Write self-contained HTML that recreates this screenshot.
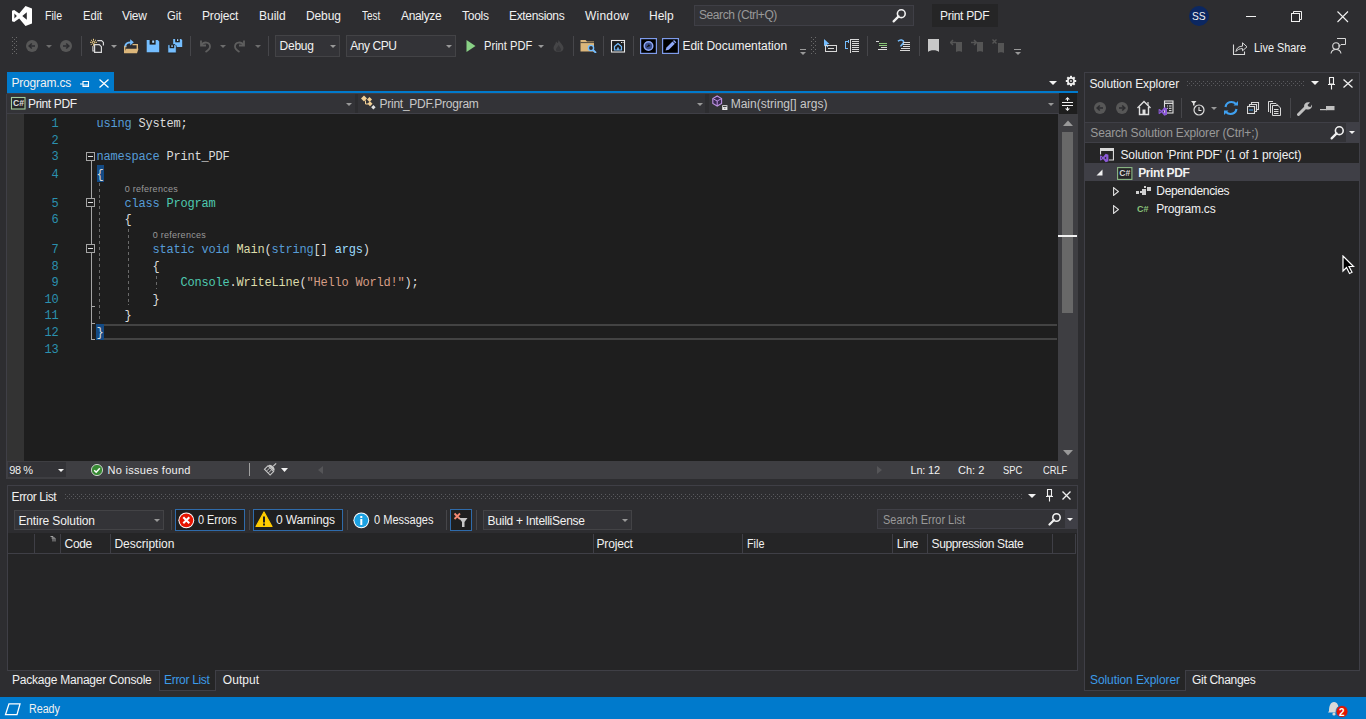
<!DOCTYPE html>
<html><head><meta charset="utf-8">
<style>
*{margin:0;padding:0;box-sizing:border-box}
html,body{width:1366px;height:719px;overflow:hidden;background:#2D2D30;font-family:"Liberation Sans",sans-serif;color:#F1F1F1;font-size:12px}
.a{position:absolute;display:block}
.t{position:absolute;white-space:nowrap;line-height:16px}
</style></head><body>

<svg class="a" style="left:12px;top:6px" width="20" height="20" viewBox="0 0 20 20"><path fill="#FFFFFF" fill-rule="evenodd" d="M0 4.8 L2.2 4.1 L7.2 7.6 L13.5 0 L20 2.4 L20 17.6 L13.5 20 L7.2 12.4 L2.2 15.9 L0 15.2 Z M2.4 7.6 L4.9 10 L2.4 12.4 Z M10.3 10 L14.8 6.2 L14.8 13.8 Z"/></svg>
<div class="t" style="left:44.60px;top:7.74px;font-size:12px;color:#F1F1F1;transform:scaleX(0.8850);transform-origin:0 0">File</div>
<div class="t" style="left:82.50px;top:7.74px;font-size:12px;color:#F1F1F1;transform:scaleX(0.9286);transform-origin:0 0">Edit</div>
<div class="t" style="left:122.00px;top:7.74px;font-size:12px;color:#F1F1F1;letter-spacing:-0.333px">View</div>
<div class="t" style="left:167.00px;top:7.74px;font-size:12px;color:#F1F1F1;transform:scaleX(0.9375);transform-origin:0 0">Git</div>
<div class="t" style="left:202.00px;top:7.74px;font-size:12px;color:#F1F1F1;letter-spacing:-0.167px">Project</div>
<div class="t" style="left:259.00px;top:7.74px;font-size:12px;color:#F1F1F1">Build</div>
<div class="t" style="left:306.00px;top:7.74px;font-size:12px;color:#F1F1F1;letter-spacing:-0.125px">Debug</div>
<div class="t" style="left:362.00px;top:7.74px;font-size:12px;color:#F1F1F1;transform:scaleX(0.8261);transform-origin:0 0">Test</div>
<div class="t" style="left:401.00px;top:7.74px;font-size:12px;color:#F1F1F1;letter-spacing:-0.333px">Analyze</div>
<div class="t" style="left:462.00px;top:7.74px;font-size:12px;color:#F1F1F1;letter-spacing:-0.250px">Tools</div>
<div class="t" style="left:509.00px;top:7.74px;font-size:12px;color:#F1F1F1;letter-spacing:-0.333px">Extensions</div>
<div class="t" style="left:585.00px;top:7.74px;font-size:12px;color:#F1F1F1;letter-spacing:0.200px">Window</div>
<div class="t" style="left:649.00px;top:7.74px;font-size:12px;color:#F1F1F1">Help</div>
<div class="a" style="left:694px;top:5px;width:220px;height:21px;background:#333337;border:1px solid #3F3F46"></div>
<div class="t" style="left:699.00px;top:7.34px;font-size:12px;color:#999999;letter-spacing:-0.429px">Search (Ctrl+Q)</div>
<svg class="a" style="left:892px;top:8px" width="15" height="15" viewBox="0 0 15 15"><circle cx="9.3" cy="5.7" r="3.9" fill="none" stroke="#F1F1F1" stroke-width="1.6"/><path d="M6.6 8.4 L1.6 13.4" stroke="#F1F1F1" stroke-width="2.2" stroke-linecap="round"/></svg>
<div class="a" style="left:932px;top:4px;width:66px;height:23px;background:#252526"></div>
<div class="t" style="left:940.00px;top:7.74px;font-size:12px;color:#F1F1F1;letter-spacing:-0.312px">Print PDF</div>
<svg class="a" style="left:1189px;top:6px" width="20" height="20" viewBox="0 0 20 20"><circle cx="10" cy="10" r="10" fill="#0B2761"/></svg>
<div class="t" style="left:1192.20px;top:7.89px;font-size:11px;color:#F1F1F1;transform:scaleX(0.9333);transform-origin:0 0">SS</div>
<div class="a" style="left:1246px;top:16px;width:10px;height:1px;background:#F1F1F1"></div>
<svg class="a" style="left:1291px;top:11px" width="12" height="12" viewBox="0 0 12 12"><rect x="0.5" y="2.5" width="8" height="8" fill="none" stroke="#F1F1F1"/><path d="M2.5 2.5 V0.5 H10.5 V8.5 H8.5" fill="none" stroke="#F1F1F1"/></svg>
<svg class="a" style="left:1337px;top:11px" width="12" height="12" viewBox="0 0 12 12"><path d="M0.5 0.5 L11 11 M11 0.5 L0.5 11" stroke="#F1F1F1" stroke-width="1.1"/></svg>
<svg class="a" style="left:12px;top:37px" width="5" height="18" viewBox="0 0 5 18"><rect x="0" y="0" width="1" height="1" fill="#6A6A6A"/><rect x="0" y="4" width="1" height="1" fill="#6A6A6A"/><rect x="0" y="8" width="1" height="1" fill="#6A6A6A"/><rect x="0" y="12" width="1" height="1" fill="#6A6A6A"/><rect x="0" y="16" width="1" height="1" fill="#6A6A6A"/><rect x="4" y="0" width="1" height="1" fill="#6A6A6A"/><rect x="4" y="4" width="1" height="1" fill="#6A6A6A"/><rect x="4" y="8" width="1" height="1" fill="#6A6A6A"/><rect x="4" y="12" width="1" height="1" fill="#6A6A6A"/><rect x="4" y="16" width="1" height="1" fill="#6A6A6A"/><rect x="2" y="2" width="1" height="1" fill="#6A6A6A"/><rect x="2" y="6" width="1" height="1" fill="#6A6A6A"/><rect x="2" y="10" width="1" height="1" fill="#6A6A6A"/><rect x="2" y="14" width="1" height="1" fill="#6A6A6A"/></svg>
<svg class="a" style="left:26px;top:40px" width="12" height="12" viewBox="0 0 12 12"><circle cx="6" cy="6" r="6" fill="#575757"/><path d="M9 6 H3.5 M5.8 3.5 L3.2 6 L5.8 8.5" stroke="#2D2D30" stroke-width="1.6" fill="none"/></svg>
<svg class="a" style="left:46.0px;top:45px" width="6" height="3" viewBox="0 0 6 3"><path d="M0 0H6 L3.0 3 Z" fill="#6D6D6D"/></svg>
<svg class="a" style="left:60px;top:40px" width="12" height="12" viewBox="0 0 12 12"><circle cx="6" cy="6" r="6" fill="#575757"/><path d="M3 6 H8.5 M6.2 3.5 L8.8 6 L6.2 8.5" stroke="#2D2D30" stroke-width="1.6" fill="none"/></svg>
<div class="a" style="left:81px;top:36px;width:1px;height:20px;background:#46464A"></div>
<svg class="a" style="left:89px;top:38px" width="16" height="16" viewBox="0 0 16 16"><g stroke="#F2D38A" stroke-width="1" fill="none"><path d="M6.40 4.30 L8.00 4.30"/><path d="M5.84 5.64 L6.97 6.77"/><path d="M4.50 6.20 L4.50 7.80"/><path d="M3.16 5.64 L2.03 6.77"/><path d="M2.60 4.30 L1.00 4.30"/><path d="M3.16 2.96 L2.03 1.83"/><path d="M4.50 2.40 L4.50 0.80"/><path d="M5.84 2.96 L6.97 1.83"/><circle cx="4.5" cy="4.3" r="1.1"/></g><path d="M8.3 2.6 H12.6 L14.4 4.4 V7.5" fill="none" stroke="#D8D8D8" stroke-width="1.2"/><path d="M5.6 14.4 V6.6 H10.3 L12.4 8.7 V14.4 Z" fill="#2D2D30" stroke="#D8D8D8" stroke-width="1.2"/><path d="M3.9 8 V13 H5" fill="none" stroke="#D8D8D8" stroke-width="1.1"/></svg>
<svg class="a" style="left:111.0px;top:45px" width="6" height="3" viewBox="0 0 6 3"><path d="M0 0H6 L3.0 3 Z" fill="#999999"/></svg>
<svg class="a" style="left:123px;top:38px" width="16" height="16" viewBox="0 0 16 16"><path d="M1.7 15 V8.5 H3.5 M9.5 6.6 H14.3 V11" fill="none" stroke="#DCB67A" stroke-width="1.4"/><path d="M1 15.2 L3 10.8 H15.5 L14 15.2 Z" fill="#DCB67A"/><path d="M2.2 8.5 C2.4 5.6 4.6 4.3 8 4.3" fill="none" stroke="#75BEFF" stroke-width="1.8"/><path d="M7.2 1.2 L10.8 4.3 L7.2 7.4 Z" fill="#75BEFF"/></svg>
<svg class="a" style="left:146px;top:40px" width="14" height="13" viewBox="0 0 14 13"><path d="M0.7 0 H11.6 L13.2 1.6 V12.2 H0.7 Z" fill="#75BEFF"/><rect x="3.6" y="0" width="6" height="4.6" fill="#1E1E1E"/><rect x="6.2" y="0.5" width="2" height="2.3" fill="#A8D4FF"/></svg>
<svg class="a" style="left:167px;top:38px" width="16" height="16" viewBox="0 0 16 16"><path d="M6.2 0.9 H14 L15.2 2.1 V9 H6.2 Z" fill="#75BEFF"/><rect x="8.2" y="0.9" width="4.6" height="3.4" fill="#1E1E1E"/><rect x="10" y="1.2" width="1.3" height="1.8" fill="#A8D4FF"/><path d="M0.8 6.6 H8 L9.3 7.9 V14.9 H0.8 Z" fill="#75BEFF" stroke="#1E1E1E" stroke-width="0.8"/><rect x="2.6" y="6.8" width="4.6" height="3.4" fill="#1E1E1E"/><rect x="4.4" y="7.2" width="1.3" height="1.8" fill="#A8D4FF"/></svg>
<div class="a" style="left:190px;top:36px;width:1px;height:20px;background:#46464A"></div>
<svg class="a" style="left:198px;top:39px" width="14" height="14" viewBox="0 0 14 14"><path d="M3 1.5 V6.5 H8" fill="none" stroke="#5E5E5E" stroke-width="1.8"/><path d="M3.5 6 C5.5 2.5 12 2.5 12 7.5 C12 10 10 11.5 7.5 13" fill="none" stroke="#5E5E5E" stroke-width="1.8"/></svg>
<svg class="a" style="left:220.0px;top:45px" width="6" height="3" viewBox="0 0 6 3"><path d="M0 0H6 L3.0 3 Z" fill="#6D6D6D"/></svg>
<svg class="a" style="left:233px;top:39px" width="14" height="14" viewBox="0 0 14 14"><path d="M11 1.5 V6.5 H6" fill="none" stroke="#5E5E5E" stroke-width="1.8"/><path d="M10.5 6 C8.5 2.5 2 2.5 2 7.5 C2 10 4 11.5 6.5 13" fill="none" stroke="#5E5E5E" stroke-width="1.8"/></svg>
<svg class="a" style="left:255.0px;top:45px" width="6" height="3" viewBox="0 0 6 3"><path d="M0 0H6 L3.0 3 Z" fill="#6D6D6D"/></svg>
<div class="a" style="left:268px;top:36px;width:1px;height:20px;background:#46464A"></div>
<div class="a" style="left:275px;top:35px;width:65px;height:22px;background:#333337;border:1px solid #434346"></div>
<div class="t" style="left:279.60px;top:37.74px;font-size:12px;color:#F1F1F1;letter-spacing:-0.250px">Debug</div>
<svg class="a" style="left:330.0px;top:45px" width="6" height="3" viewBox="0 0 6 3"><path d="M0 0H6 L3.0 3 Z" fill="#999999"/></svg>
<div class="a" style="left:346px;top:35px;width:110px;height:22px;background:#333337;border:1px solid #434346"></div>
<div class="t" style="left:350.20px;top:37.74px;font-size:12px;color:#F1F1F1;letter-spacing:-0.417px">Any CPU</div>
<svg class="a" style="left:446.0px;top:45px" width="6" height="3" viewBox="0 0 6 3"><path d="M0 0H6 L3.0 3 Z" fill="#999999"/></svg>
<svg class="a" style="left:466px;top:40px" width="10" height="12" viewBox="0 0 10 12"><path d="M0.5 0 L9.5 6 L0.5 12 Z" fill="#89D185"/></svg>
<div class="t" style="left:483.50px;top:37.54px;font-size:12px;color:#F1F1F1;transform:scaleX(0.9288);transform-origin:0 0">Print PDF</div>
<svg class="a" style="left:538.0px;top:45px" width="6" height="3" viewBox="0 0 6 3"><path d="M0 0H6 L3.0 3 Z" fill="#999999"/></svg>
<svg class="a" style="left:553px;top:40px" width="11" height="12" viewBox="0 0 11 12"><path d="M5.5 0 C7 3 10.5 5 10.5 8 C10.5 10.5 8.5 12 5.5 12 C2.5 12 0.5 10.5 0.5 8 C0.5 5.5 3 4 3 1.5 C4.5 3 5 4.5 5.5 0 Z" fill="#454547"/><path d="M5.5 5 C6.5 7 8 8 8 9.5 C8 11 7 11.5 5.5 11.5 C4 11.5 3 11 3 9.5 C3 8 5 7 5.5 5 Z" fill="#37373A"/></svg>
<div class="a" style="left:573px;top:36px;width:1px;height:20px;background:#46464A"></div>
<svg class="a" style="left:580px;top:39px" width="17" height="14" viewBox="0 0 17 14"><path d="M0.5 1 H5.5 L7 2.5 H14 V12.5 H0.5 Z" fill="#DCB67A"/><path d="M0.5 3.6 H14" stroke="#2D2D30" stroke-width="0.8"/><circle cx="11" cy="9" r="2.6" fill="#2D2D30" stroke="#75BEFF" stroke-width="1.4"/><path d="M13 11 L16 14" stroke="#75BEFF" stroke-width="1.8"/></svg>
<div class="a" style="left:603px;top:36px;width:1px;height:20px;background:#46464A"></div>
<svg class="a" style="left:610px;top:39px" width="16" height="14" viewBox="0 0 16 14"><rect x="1.5" y="1.5" width="13" height="11.5" fill="#1E1E1E" stroke="#E8E8E8" stroke-width="1.1"/><path d="M4.5 7.5 L8 4.5 L11.5 7.5 V11 H4.5 Z" fill="none" stroke="#75BEFF" stroke-width="1.2"/><rect x="7.2" y="8.5" width="1.6" height="2.5" fill="#75BEFF"/><rect x="11" y="3" width="1" height="1" fill="#E8E8E8"/><rect x="12.6" y="3" width="1" height="1" fill="#E8E8E8"/></svg>
<div class="a" style="left:633px;top:36px;width:1px;height:20px;background:#46464A"></div>
<svg class="a" style="left:640px;top:38px" width="17" height="16" viewBox="0 0 17 16"><rect x="0.6" y="0.6" width="15.8" height="14.8" fill="#000" stroke="#7E9BEA" stroke-width="1.2"/><circle cx="8.5" cy="8" r="4.3" fill="#3A4F8F" stroke="#8FA8F5" stroke-width="1.4"/><path d="M6 9.5 L8.8 6.3 L10.5 8 Z" fill="#111"/></svg>
<svg class="a" style="left:662px;top:38px" width="17" height="16" viewBox="0 0 17 16"><rect x="0.6" y="0.6" width="15.8" height="14.8" fill="#000" stroke="#7E9BEA" stroke-width="1.2"/><path d="M3.5 12.5 L4.5 9.5 L10.5 3.5 L12.8 5.8 L6.8 11.8 Z" fill="#8FA8F5"/><path d="M11.5 2.5 L13.8 4.8" stroke="#8FA8F5" stroke-width="1.4"/></svg>
<div class="t" style="left:682.40px;top:38.34px;font-size:12px;color:#F1F1F1">Edit Documentation</div>
<div class="a" style="left:800px;top:49px;width:6px;height:1px;background:#999999"></div>
<svg class="a" style="left:800.0px;top:52px" width="6" height="3" viewBox="0 0 6 3"><path d="M0 0H6 L3.0 3 Z" fill="#999999"/></svg>
<svg class="a" style="left:811px;top:37px" width="5" height="18" viewBox="0 0 5 18"><rect x="0" y="0" width="1" height="1" fill="#6A6A6A"/><rect x="0" y="4" width="1" height="1" fill="#6A6A6A"/><rect x="0" y="8" width="1" height="1" fill="#6A6A6A"/><rect x="0" y="12" width="1" height="1" fill="#6A6A6A"/><rect x="0" y="16" width="1" height="1" fill="#6A6A6A"/><rect x="4" y="0" width="1" height="1" fill="#6A6A6A"/><rect x="4" y="4" width="1" height="1" fill="#6A6A6A"/><rect x="4" y="8" width="1" height="1" fill="#6A6A6A"/><rect x="4" y="12" width="1" height="1" fill="#6A6A6A"/><rect x="4" y="16" width="1" height="1" fill="#6A6A6A"/><rect x="2" y="2" width="1" height="1" fill="#6A6A6A"/><rect x="2" y="6" width="1" height="1" fill="#6A6A6A"/><rect x="2" y="10" width="1" height="1" fill="#6A6A6A"/><rect x="2" y="14" width="1" height="1" fill="#6A6A6A"/></svg>
<svg class="a" style="left:823px;top:38px" width="15" height="15" viewBox="0 0 15 15"><path d="M1 1 V8.5 L2.8 6.8 L4.2 9.3 L5.3 8.7 L4 6.2 L6.5 6.1 Z" fill="#75BEFF"/><rect x="2.5" y="7.5" width="11" height="6" fill="none" stroke="#D8D8D8" stroke-width="1"/><rect x="5" y="10" width="6" height="1" fill="#D8D8D8"/></svg>
<svg class="a" style="left:844px;top:38px" width="16" height="15" viewBox="0 0 16 15"><rect x="1" y="3" width="1" height="8" fill="#75BEFF"/><rect x="1" y="3" width="3" height="1" fill="#75BEFF"/><rect x="1" y="10" width="3" height="1" fill="#75BEFF"/><rect x="4" y="2" width="1" height="3" fill="#75BEFF"/><rect x="6" y="1" width="1" height="14" fill="#D8D8D8"/><rect x="6" y="1" width="9" height="1" fill="#D8D8D8"/><rect x="8" y="3" width="7" height="1" fill="#D8D8D8"/><rect x="8" y="5" width="7" height="1" fill="#D8D8D8"/><rect x="8" y="7" width="7" height="1" fill="#D8D8D8"/><rect x="8" y="9" width="7" height="1" fill="#D8D8D8"/><rect x="8" y="11" width="7" height="1" fill="#D8D8D8"/><rect x="8" y="13" width="7" height="1" fill="#D8D8D8"/></svg>
<div class="a" style="left:867px;top:36px;width:1px;height:20px;background:#46464A"></div>
<svg class="a" style="left:876px;top:40px" width="12" height="11" viewBox="0 0 12 11"><rect x="0" y="1" width="3" height="1" fill="#D8D8D8"/><rect x="3" y="3" width="8" height="1" fill="#8DC87A"/><rect x="3" y="5" width="8" height="1" fill="#8DC87A"/><rect x="5" y="7" width="6" height="1" fill="#D8D8D8"/><rect x="2" y="9" width="9" height="1" fill="#D8D8D8"/></svg>
<svg class="a" style="left:897px;top:39px" width="14" height="13" viewBox="0 0 14 13"><path d="M1 2.2 C3 0.2 7 0.6 6.6 3.4 C6.3 5.4 4.2 5.8 3.6 7.6" fill="none" stroke="#75BEFF" stroke-width="1.6"/><rect x="6" y="3" width="7" height="1" fill="#D8D8D8"/><rect x="6" y="5" width="7" height="1" fill="#D8D8D8"/><rect x="6" y="7" width="7" height="1" fill="#D8D8D8"/><rect x="4" y="9" width="9" height="1" fill="#D8D8D8"/><rect x="3" y="11" width="10" height="1" fill="#D8D8D8"/></svg>
<div class="a" style="left:919px;top:36px;width:1px;height:20px;background:#46464A"></div>
<svg class="a" style="left:928px;top:39px" width="12" height="14" viewBox="0 0 12 14"><path d="M0 0 H11 V13 C9 10.5 2 10.5 0 13 Z" fill="#C8C8C8"/></svg>
<svg class="a" style="left:950px;top:39px" width="13" height="14" viewBox="0 0 13 14"><path d="M6 3 H12 V13 C11 12 7 12 6 13 Z" fill="#555555"/><path d="M6 3.5 H0.8 M3 1 L0.5 3.5 L3 6" stroke="#555555" stroke-width="1.5" fill="none"/></svg>
<svg class="a" style="left:971px;top:39px" width="14" height="14" viewBox="0 0 14 14"><path d="M6 3 H12 V13 C11 12 7 12 6 13 Z" fill="#555555"/><path d="M0 3.5 H5 M3 1 L5.5 3.5 L3 6" stroke="#555555" stroke-width="1.5" fill="none"/></svg>
<svg class="a" style="left:992px;top:39px" width="14" height="14" viewBox="0 0 14 14"><path d="M6 4 H12 V14 C11 13 7 13 6 14 Z" fill="#555555"/><path d="M0.5 0.5 L4.5 4.5 M4.5 0.5 L0.5 4.5" stroke="#555555" stroke-width="1.4"/></svg>
<div class="a" style="left:1014px;top:49px;width:7px;height:1px;background:#999999"></div>
<svg class="a" style="left:1014.5px;top:52px" width="6" height="3" viewBox="0 0 6 3"><path d="M0 0H6 L3.0 3 Z" fill="#999999"/></svg>
<svg class="a" style="left:1232px;top:41px" width="16" height="15" viewBox="0 0 16 15"><path d="M1.5 3.5 V13.5 H12.5 V10.5" fill="none" stroke="#D8D8D8" stroke-width="1.1"/><path d="M4 10.5 C4.5 6.8 7 5.2 10.5 5.2 V1.8 L15 5.8 L10.5 9.8 V7.6 C7.5 7.6 5.5 8.5 4 10.5 Z" fill="none" stroke="#D8D8D8" stroke-width="1" stroke-linejoin="round"/></svg>
<div class="t" style="left:1253.50px;top:39.54px;font-size:12px;color:#F1F1F1;transform:scaleX(0.9052);transform-origin:0 0">Live Share</div>
<svg class="a" style="left:1330px;top:38px" width="16" height="16" viewBox="0 0 16 16"><circle cx="6" cy="8" r="3.3" fill="none" stroke="#D8D8D8" stroke-width="1.1"/><path d="M1 15.5 C1.5 12.5 3.5 11.5 6 11.5 C8.5 11.5 10.5 12.5 11 15.5" fill="none" stroke="#D8D8D8" stroke-width="1.1"/><path d="M7 0.5 H15.5 V6.5 H11 L9 8.5 V6.5" fill="none" stroke="#D8D8D8" stroke-width="1"/></svg>
<div class="a" style="left:7px;top:72px;width:107px;height:20px;background:#007ACC"></div>
<div class="t" style="left:11.40px;top:74.74px;font-size:12px;color:#F1F1F1;letter-spacing:-0.156px">Program.cs</div>
<svg class="a" style="left:80px;top:80px" width="10" height="8" viewBox="0 0 10 8"><path d="M0 4 H3 M3 1 V7 M3 1.5 H8.5 V6.5 H3 M3 5 H8.5" fill="none" stroke="#FFFFFF" stroke-width="1.1"/></svg>
<svg class="a" style="left:99px;top:79px" width="10" height="9" viewBox="0 0 10 9"><path d="M0.5 0.5 L9.5 8.5 M9.5 0.5 L0.5 8.5" stroke="#FFFFFF" stroke-width="1.3"/></svg>
<div class="a" style="left:7px;top:91px;width:1071px;height:2px;background:#007ACC"></div>
<svg class="a" style="left:1049.0px;top:81px" width="8" height="4" viewBox="0 0 8 4"><path d="M0 0H8 L4.0 4 Z" fill="#F1F1F1"/></svg>
<svg class="a" style="left:1065px;top:75px" width="12" height="12" viewBox="0 0 12 12"><g fill="#F1F1F1"><circle cx="6" cy="6" r="3.9"/><rect x="5" y="0.8" width="2" height="10.4" transform="rotate(0 6 6)"/><rect x="5" y="0.8" width="2" height="10.4" transform="rotate(45 6 6)"/><rect x="5" y="0.8" width="2" height="10.4" transform="rotate(90 6 6)"/><rect x="5" y="0.8" width="2" height="10.4" transform="rotate(135 6 6)"/></g><circle cx="6" cy="6" r="2.3" fill="#2D2D30"/><circle cx="6" cy="6" r="1.1" fill="#C8C8C8"/></svg>
<div class="a" style="left:7px;top:93px;width:1052px;height:21px;background:#3F3F46"></div>
<div class="a" style="left:7px;top:94px;width:348px;height:19px;background:#333337"></div>
<div class="a" style="left:358px;top:94px;width:347px;height:19px;background:#333337"></div>
<div class="a" style="left:709px;top:94px;width:350px;height:19px;background:#333337"></div>
<div class="a" style="left:355px;top:94px;width:3px;height:19px;background:#2D2D30"></div>
<div class="a" style="left:705px;top:94px;width:4px;height:19px;background:#2D2D30"></div>
<svg class="a" style="left:10px;top:96px" width="16" height="14" viewBox="0 0 16 14"><rect x="1.5" y="1.5" width="13.5" height="11.5" fill="#252526" stroke="#A3CC9C" stroke-width="1.1"/><text x="3" y="10.2" font-family="Liberation Sans" font-weight="bold" font-size="8.6" fill="#E0E0E0">C#</text></svg>
<div class="t" style="left:28.00px;top:95.64px;font-size:12px;color:#F1F1F1;letter-spacing:-0.375px">Print PDF</div>
<svg class="a" style="left:345.5px;top:103px" width="6" height="3" viewBox="0 0 6 3"><path d="M0 0H6 L3.0 3 Z" fill="#999999"/></svg>
<svg class="a" style="left:360px;top:95px" width="17" height="16" viewBox="0 0 17 16"><g fill="#F2D095"><path d="M1 3.5 L4 0.5 L7 3.5 L4 6.5 Z"/><path d="M7 4.5 L9.5 2 L12 4.5 L9.5 7 Z"/><path d="M7.5 8.8 L10 6.3 L12.5 8.8 L10 11.3 Z"/></g><path d="M5.5 5.5 V9 H8" fill="none" stroke="#F2D095" stroke-width="1"/><path d="M11.2 12.3 L13.4 10.1 L15.6 12.3 L13.4 14.5 Z" fill="#E0E0E0"/></svg>
<div class="t" style="left:379.50px;top:95.64px;font-size:12px;color:#C8C8C8;letter-spacing:-0.250px">Print_PDF.Program</div>
<svg class="a" style="left:697.0px;top:103px" width="6" height="3" viewBox="0 0 6 3"><path d="M0 0H6 L3.0 3 Z" fill="#999999"/></svg>
<svg class="a" style="left:712px;top:95px" width="17" height="16" viewBox="0 0 17 16"><path d="M5.2 1 L9.6 3.5 V8.5 L5.2 11 L0.8 8.5 V3.5 Z" fill="#3A2852" stroke="#BE93E4" stroke-width="1.1"/><path d="M5.2 6 V10.8 M5.2 6 L1.2 3.8 M5.2 6 L9.2 3.8" stroke="#BE93E4" stroke-width="1"/><rect x="10.2" y="10.2" width="5.2" height="4.8" fill="#E8E8E8"/><rect x="11" y="11.1" width="3.6" height="0.9" fill="#2D2D30"/><rect x="12.4" y="12.8" width="0.9" height="0.9" fill="#2D2D30"/></svg>
<div class="t" style="left:730.70px;top:95.64px;font-size:12px;color:#C8C8C8">Main(string[] args)</div>
<svg class="a" style="left:1048.0px;top:103px" width="6" height="3" viewBox="0 0 6 3"><path d="M0 0H6 L3.0 3 Z" fill="#999999"/></svg>
<div class="a" style="left:1059px;top:93px;width:18px;height:21px;background:#1E1E1E"></div>
<svg class="a" style="left:1060px;top:96px" width="16" height="16" viewBox="0 0 16 16"><rect x="2" y="6" width="11" height="1" fill="#F1F1F1"/><rect x="2" y="9" width="11" height="1" fill="#F1F1F1"/><rect x="7" y="2.5" width="1" height="2.5" fill="#F1F1F1"/><rect x="7" y="11" width="1" height="2.5" fill="#F1F1F1"/><path d="M5 3.5 L7.5 1 L10 3.5 Z M5 12.5 L7.5 15 L10 12.5 Z" fill="#F1F1F1"/></svg>
<div class="a" style="left:6px;top:94px;width:1px;height:385px;background:#3F3F46"></div>
<div class="a" style="left:7px;top:114px;width:17px;height:347px;background:#333333"></div>
<div class="a" style="left:24px;top:114px;width:1034px;height:347px;background:#1E1E1E"></div>
<div class="a" style="left:1058px;top:114px;width:20px;height:347px;background:#3E3E42"></div>
<svg class="a" style="left:1063px;top:120px" width="10" height="6" viewBox="0 0 10 6"><path d="M0 6 L5 0.5 L10 6 Z" fill="#999999"/></svg>
<div class="a" style="left:1062px;top:132px;width:11px;height:181px;background:#686868"></div>
<div class="a" style="left:1058px;top:235px;width:19px;height:2px;background:#F1F1F1"></div>
<svg class="a" style="left:1063px;top:450px" width="10" height="6" viewBox="0 0 10 6"><path d="M0 0 L5 5.5 L10 0 Z" fill="#999999"/></svg>
<div class="a" style="left:96px;top:324px;width:961px;height:16px;border-top:2px solid #434343;border-bottom:2px solid #434343"></div>
<div class="a" style="left:97px;top:165px;width:7px;height:17px;background:#134A84"></div>
<div class="a" style="left:96px;top:324px;width:8px;height:16px;background:#134A84"></div>
<div class="t" style="left:51.50px;top:116px;font-family:'Liberation Mono',monospace;font-size:12px;letter-spacing:-0.2px;color:#2B91AF">1</div>
<div class="t" style="left:51.50px;top:133px;font-family:'Liberation Mono',monospace;font-size:12px;letter-spacing:-0.2px;color:#2B91AF">2</div>
<div class="t" style="left:51.50px;top:149px;font-family:'Liberation Mono',monospace;font-size:12px;letter-spacing:-0.2px;color:#2B91AF">3</div>
<div class="t" style="left:51.50px;top:167px;font-family:'Liberation Mono',monospace;font-size:12px;letter-spacing:-0.2px;color:#2B91AF">4</div>
<div class="t" style="left:51.50px;top:196px;font-family:'Liberation Mono',monospace;font-size:12px;letter-spacing:-0.2px;color:#2B91AF">5</div>
<div class="t" style="left:51.50px;top:212px;font-family:'Liberation Mono',monospace;font-size:12px;letter-spacing:-0.2px;color:#2B91AF">6</div>
<div class="t" style="left:51.50px;top:242px;font-family:'Liberation Mono',monospace;font-size:12px;letter-spacing:-0.2px;color:#2B91AF">7</div>
<div class="t" style="left:51.50px;top:259px;font-family:'Liberation Mono',monospace;font-size:12px;letter-spacing:-0.2px;color:#2B91AF">8</div>
<div class="t" style="left:51.50px;top:275px;font-family:'Liberation Mono',monospace;font-size:12px;letter-spacing:-0.2px;color:#2B91AF">9</div>
<div class="t" style="left:44.50px;top:292px;font-family:'Liberation Mono',monospace;font-size:12px;letter-spacing:-0.2px;color:#2B91AF">10</div>
<div class="t" style="left:44.50px;top:308px;font-family:'Liberation Mono',monospace;font-size:12px;letter-spacing:-0.2px;color:#2B91AF">11</div>
<div class="t" style="left:44.50px;top:325px;font-family:'Liberation Mono',monospace;font-size:12px;letter-spacing:-0.2px;color:#2B91AF">12</div>
<div class="t" style="left:44.50px;top:342px;font-family:'Liberation Mono',monospace;font-size:12px;letter-spacing:-0.2px;color:#2B91AF">13</div>
<div class="t" style="left:96.50px;top:116px;font-family:'Liberation Mono',monospace;font-size:12px;letter-spacing:-0.2px;color:#DCDCDC"><span style="color:#569CD6">using</span> System;</div>
<div class="t" style="left:96.50px;top:149px;font-family:'Liberation Mono',monospace;font-size:12px;letter-spacing:-0.2px;color:#DCDCDC"><span style="color:#569CD6">namespace</span> Print_PDF</div>
<div class="t" style="left:96.50px;top:167px;font-family:'Liberation Mono',monospace;font-size:12px;letter-spacing:-0.2px;color:#DCDCDC">{</div>
<div class="t" style="left:124.50px;top:196px;font-family:'Liberation Mono',monospace;font-size:12px;letter-spacing:-0.2px;color:#DCDCDC"><span style="color:#569CD6">class</span> <span style="color:#4EC9B0">Program</span></div>
<div class="t" style="left:124.50px;top:212px;font-family:'Liberation Mono',monospace;font-size:12px;letter-spacing:-0.2px;color:#DCDCDC">{</div>
<div class="t" style="left:152.50px;top:242px;font-family:'Liberation Mono',monospace;font-size:12px;letter-spacing:-0.2px;color:#DCDCDC"><span style="color:#569CD6">static</span> <span style="color:#569CD6">void</span> <span style="color:#DCDCAA">Main</span>(<span style="color:#569CD6">string</span>[] <span style="color:#9CDCFE">args</span>)</div>
<div class="t" style="left:152.50px;top:259px;font-family:'Liberation Mono',monospace;font-size:12px;letter-spacing:-0.2px;color:#DCDCDC">{</div>
<div class="t" style="left:180.50px;top:275px;font-family:'Liberation Mono',monospace;font-size:12px;letter-spacing:-0.2px;color:#DCDCDC"><span style="color:#4EC9B0">Console</span>.<span style="color:#DCDCAA">WriteLine</span>(<span style="color:#D69D85">&quot;Hello World!&quot;</span>);</div>
<div class="t" style="left:152.50px;top:292px;font-family:'Liberation Mono',monospace;font-size:12px;letter-spacing:-0.2px;color:#DCDCDC">}</div>
<div class="t" style="left:124.50px;top:308px;font-family:'Liberation Mono',monospace;font-size:12px;letter-spacing:-0.2px;color:#DCDCDC">}</div>
<div class="t" style="left:96.50px;top:325px;font-family:'Liberation Mono',monospace;font-size:12px;letter-spacing:-0.2px;color:#DCDCDC">}</div>
<div class="t" style="left:124.70px;top:181.18px;font-size:9px;color:#999999;letter-spacing:0.273px">0 references</div>
<div class="t" style="left:152.70px;top:227.18px;font-size:9px;color:#999999;letter-spacing:0.273px">0 references</div>
<div class="a" style="left:91px;top:161px;width:1px;height:178px;background:#A5A5A5"></div>
<svg class="a" style="left:86px;top:152px" width="9" height="9" viewBox="0 0 9 9"><rect x="0.5" y="0.5" width="8" height="8" fill="#1E1E1E" stroke="#A5A5A5"/><rect x="2" y="4" width="5" height="1" fill="#E0E0E0"/></svg>
<svg class="a" style="left:86px;top:198px" width="9" height="9" viewBox="0 0 9 9"><rect x="0.5" y="0.5" width="8" height="8" fill="#1E1E1E" stroke="#A5A5A5"/><rect x="2" y="4" width="5" height="1" fill="#E0E0E0"/></svg>
<svg class="a" style="left:86px;top:244px" width="9" height="9" viewBox="0 0 9 9"><rect x="0.5" y="0.5" width="8" height="8" fill="#1E1E1E" stroke="#A5A5A5"/><rect x="2" y="4" width="5" height="1" fill="#E0E0E0"/></svg>
<div class="a" style="left:91px;top:306px;width:4px;height:1px;background:#A5A5A5"></div>
<div class="a" style="left:91px;top:323px;width:4px;height:1px;background:#A5A5A5"></div>
<div class="a" style="left:91px;top:339px;width:4px;height:1px;background:#A5A5A5"></div>
<div class="a" style="left:99px;top:183px;width:1px;height:138px;background:repeating-linear-gradient(to bottom,#6A6A6A 0 3px,transparent 3px 5.8px)"></div>
<div class="a" style="left:128px;top:229px;width:1px;height:76px;background:repeating-linear-gradient(to bottom,#6A6A6A 0 3px,transparent 3px 5.8px)"></div>
<div class="a" style="left:156px;top:276px;width:1px;height:13px;background:repeating-linear-gradient(to bottom,#6A6A6A 0 3px,transparent 3px 5.8px)"></div>
<div class="a" style="left:7px;top:461px;width:1071px;height:18px;background:#3E3E42"></div>
<div class="a" style="left:8px;top:462px;width:58px;height:15px;background:#333337"></div>
<div class="t" style="left:9.30px;top:461.79px;font-size:11px;color:#F1F1F1;letter-spacing:-0.433px">98 %</div>
<svg class="a" style="left:58.0px;top:469px" width="6" height="3" viewBox="0 0 6 3"><path d="M0 0H6 L3.0 3 Z" fill="#F1F1F1"/></svg>
<svg class="a" style="left:91px;top:464px" width="12" height="12" viewBox="0 0 12 12"><circle cx="6" cy="6" r="5.6" fill="#388A34" stroke="#E8E8E8" stroke-width="0.8"/><path d="M3.2 6.2 L5.2 8.2 L8.8 4.2" fill="none" stroke="#FFFFFF" stroke-width="1.5"/></svg>
<div class="t" style="left:107.60px;top:461.79px;font-size:11px;color:#F1F1F1;letter-spacing:0.286px">No issues found</div>
<div class="a" style="left:249px;top:463px;width:1px;height:13px;background:#A0A0A0"></div>
<svg class="a" style="left:263px;top:460px" width="16" height="16" viewBox="0 0 16 16"><g transform="rotate(45 7.5 9)"><rect x="3.5" y="8.5" width="8" height="5" fill="#3E3E42" stroke="#C8C8C8" stroke-width="1.1"/><path d="M6.2 9 V13 M8.8 9 V13" stroke="#C8C8C8" stroke-width="0.9"/><path d="M3.5 8 C3.5 4.5 11.5 4.5 11.5 8 Z" fill="#C8C8C8"/><path d="M7.5 5 V1" stroke="#C8C8C8" stroke-width="1.2"/></g></svg>
<svg class="a" style="left:281.0px;top:468px" width="7" height="4" viewBox="0 0 7 4"><path d="M0 0H7 L3.5 4 Z" fill="#F1F1F1"/></svg>
<svg class="a" style="left:318px;top:466px" width="5" height="8" viewBox="0 0 5 8"><path d="M5 0 L0 4 L5 8 Z" fill="#555558"/></svg>
<svg class="a" style="left:877px;top:466px" width="5" height="8" viewBox="0 0 5 8"><path d="M0 0 L5 4 L0 8 Z" fill="#555558"/></svg>
<div class="t" style="left:910.50px;top:461.79px;font-size:11px;color:#F1F1F1;letter-spacing:-0.200px">Ln: 12</div>
<div class="t" style="left:958.00px;top:461.79px;font-size:11px;color:#F1F1F1">Ch: 2</div>
<div class="t" style="left:1003.00px;top:461.79px;font-size:11px;color:#F1F1F1;transform:scaleX(0.8478);transform-origin:0 0">SPC</div>
<div class="t" style="left:1042.50px;top:461.79px;font-size:11px;color:#F1F1F1;transform:scaleX(0.8448);transform-origin:0 0">CRLF</div>
<div class="a" style="left:7px;top:485px;width:1071px;height:186px;background:#252526;border:1px solid #3F3F46"></div>
<div class="a" style="left:8px;top:486px;width:1069px;height:47px;background:#2D2D30"></div>
<div class="t" style="left:11.60px;top:488.94px;font-size:12px;color:#F1F1F1;letter-spacing:-0.400px">Error List</div>
<svg class="a" style="left:65px;top:494px" width="958" height="5"><defs><pattern id="g65" width="4" height="5" patternUnits="userSpaceOnUse"><rect x="0" y="0" width="1" height="1" fill="#5A5A5E"/><rect x="2" y="2" width="1" height="1" fill="#5A5A5E"/><rect x="0" y="4" width="1" height="1" fill="#5A5A5E"/></pattern></defs><rect width="958" height="5" fill="url(#g65)"/></svg>
<svg class="a" style="left:1028.0px;top:494px" width="8" height="4" viewBox="0 0 8 4"><path d="M0 0H8 L4.0 4 Z" fill="#F1F1F1"/></svg>
<svg class="a" style="left:1045px;top:489px" width="9" height="13" viewBox="0 0 9 13"><path d="M2 0.5 H7 M2.5 0.5 V7 H6.5 V0.5 M1 7.5 H8 M4.5 7.5 V12.5" fill="none" stroke="#F1F1F1" stroke-width="1.1"/></svg>
<svg class="a" style="left:1062px;top:491px" width="9" height="9" viewBox="0 0 9 9"><path d="M0.5 0.5 L8.5 8.5 M8.5 0.5 L0.5 8.5" stroke="#F1F1F1" stroke-width="1.3"/></svg>
<div class="a" style="left:14px;top:510px;width:150px;height:20px;background:#333337;border:1px solid #434346"></div>
<div class="t" style="left:18.40px;top:512.64px;font-size:12px;color:#F1F1F1;letter-spacing:-0.107px">Entire Solution</div>
<svg class="a" style="left:154.0px;top:519px" width="6" height="3" viewBox="0 0 6 3"><path d="M0 0H6 L3.0 3 Z" fill="#999999"/></svg>
<div class="a" style="left:171px;top:510px;width:1px;height:20px;background:#46464A"></div>
<div class="a" style="left:175px;top:509px;width:70px;height:22px;background:#1F1F1F;border:1px solid #2F6BAA"></div>
<svg class="a" style="left:178px;top:512px" width="17" height="17" viewBox="0 0 17 17"><circle cx="8.3" cy="8.3" r="7.9" fill="#FFFFFF"/><circle cx="8.3" cy="8.3" r="6.9" fill="#E51400"/><path d="M5.3 5.3 L11.3 11.3 M11.3 5.3 L5.3 11.3" stroke="#FFFFFF" stroke-width="2"/></svg>
<div class="t" style="left:198.30px;top:511.84px;font-size:12px;color:#F1F1F1;transform:scaleX(0.9070);transform-origin:0 0">0 Errors</div>
<div class="a" style="left:249px;top:510px;width:1px;height:20px;background:#46464A"></div>
<div class="a" style="left:253px;top:509px;width:90px;height:22px;background:#1F1F1F;border:1px solid #2F6BAA"></div>
<svg class="a" style="left:255px;top:511px" width="18" height="17" viewBox="0 0 18 17"><path d="M9 1 L17 15.5 H1 Z" fill="#FFCC00" stroke="#FFCC00" stroke-width="1.2" stroke-linejoin="round"/><rect x="8" y="5.5" width="2" height="6" fill="#1E1E1E"/><rect x="8" y="12.5" width="2" height="2" fill="#1E1E1E"/></svg>
<div class="t" style="left:276.00px;top:511.84px;font-size:12px;color:#F1F1F1;letter-spacing:-0.144px">0 Warnings</div>
<div class="a" style="left:347px;top:510px;width:1px;height:20px;background:#46464A"></div>
<svg class="a" style="left:353px;top:512px" width="17" height="17" viewBox="0 0 17 17"><circle cx="8.3" cy="8.3" r="7.9" fill="#FFFFFF"/><circle cx="8.3" cy="8.3" r="6.9" fill="#1BA1E2"/><rect x="7.3" y="7" width="2" height="6" fill="#FFFFFF"/><rect x="7.3" y="4" width="2" height="2" fill="#FFFFFF"/></svg>
<div class="t" style="left:374.00px;top:511.84px;font-size:12px;color:#F1F1F1;transform:scaleX(0.9200);transform-origin:0 0">0 Messages</div>
<div class="a" style="left:446px;top:510px;width:1px;height:20px;background:#46464A"></div>
<div class="a" style="left:450px;top:509px;width:22px;height:22px;background:#1F1F1F;border:1px solid #2F6BAA"></div>
<svg class="a" style="left:453px;top:512px" width="16" height="16" viewBox="0 0 16 16"><path d="M1.5 1.5 L7 7 M7 1.5 L1.5 7" stroke="#F48771" stroke-width="1.8"/><path d="M6 6 H14.5 L11.5 10 V15 H9 V10 Z" fill="#C8C8C8"/></svg>
<div class="a" style="left:476px;top:510px;width:1px;height:20px;background:#46464A"></div>
<div class="a" style="left:483px;top:510px;width:149px;height:20px;background:#333337;border:1px solid #434346"></div>
<div class="t" style="left:487.60px;top:512.64px;font-size:12px;color:#F1F1F1;letter-spacing:-0.263px">Build + IntelliSense</div>
<svg class="a" style="left:622.0px;top:519px" width="6" height="3" viewBox="0 0 6 3"><path d="M0 0H6 L3.0 3 Z" fill="#999999"/></svg>
<div class="a" style="left:877px;top:509px;width:200px;height:20px;background:#333337;border:1px solid #3F3F46"></div>
<div class="a" style="left:1065px;top:510px;width:11px;height:18px;background:#3F3F46"></div>
<div class="t" style="left:882.50px;top:512.34px;font-size:12px;color:#999999;transform:scaleX(0.9121);transform-origin:0 0">Search Error List</div>
<svg class="a" style="left:1048px;top:512px" width="14" height="14" viewBox="0 0 14 14"><circle cx="8.5" cy="5.5" r="3.7" fill="none" stroke="#F1F1F1" stroke-width="1.6"/><path d="M6 8 L1.5 12.5" stroke="#F1F1F1" stroke-width="2.2" stroke-linecap="round"/></svg>
<svg class="a" style="left:1067.0px;top:518px" width="6" height="3" viewBox="0 0 6 3"><path d="M0 0H6 L3.0 3 Z" fill="#F1F1F1"/></svg>
<div class="a" style="left:8px;top:553px;width:1068px;height:1px;background:#3F3F46"></div>
<div class="a" style="left:34px;top:534px;width:1px;height:19px;background:#3F3F46"></div>
<div class="a" style="left:60px;top:534px;width:1px;height:19px;background:#3F3F46"></div>
<div class="a" style="left:110px;top:534px;width:1px;height:19px;background:#3F3F46"></div>
<div class="a" style="left:593px;top:534px;width:1px;height:19px;background:#3F3F46"></div>
<div class="a" style="left:742px;top:534px;width:1px;height:19px;background:#3F3F46"></div>
<div class="a" style="left:892px;top:534px;width:1px;height:19px;background:#3F3F46"></div>
<div class="a" style="left:927px;top:534px;width:1px;height:19px;background:#3F3F46"></div>
<div class="a" style="left:1052px;top:534px;width:1px;height:19px;background:#3F3F46"></div>
<div class="a" style="left:1075px;top:534px;width:1px;height:19px;background:#3F3F46"></div>
<svg class="a" style="left:50px;top:536px" width="7" height="6" viewBox="0 0 7 6"><path d="M0.5 0.5 H3 M3 0.5 V5.5 M5 2 V5.5 M1.5 2 H5" stroke="#A0A0A0" stroke-width="1"/></svg>
<div class="t" style="left:64.60px;top:535.74px;font-size:12px;color:#F1F1F1;letter-spacing:-0.333px">Code</div>
<div class="t" style="left:114.40px;top:535.74px;font-size:12px;color:#F1F1F1">Description</div>
<div class="t" style="left:596.50px;top:535.74px;font-size:12px;color:#F1F1F1;letter-spacing:-0.167px">Project</div>
<div class="t" style="left:746.50px;top:535.74px;font-size:12px;color:#F1F1F1;transform:scaleX(0.9000);transform-origin:0 0">File</div>
<div class="t" style="left:896.80px;top:535.74px;font-size:12px;color:#F1F1F1;letter-spacing:-0.333px">Line</div>
<div class="t" style="left:931.50px;top:535.74px;font-size:12px;color:#F1F1F1;letter-spacing:-0.375px">Suppression State</div>
<div class="a" style="left:159px;top:670px;width:57px;height:21px;background:#252526;border:1px solid #3F3F46;border-top:none"></div>
<div class="t" style="left:12.00px;top:672.34px;font-size:12px;color:#F1F1F1;letter-spacing:-0.227px">Package Manager Console</div>
<div class="t" style="left:164.00px;top:672.34px;font-size:12px;color:#3C9BE8;letter-spacing:-0.311px">Error List</div>
<div class="t" style="left:222.80px;top:672.34px;font-size:12px;color:#F1F1F1;letter-spacing:0.040px">Output</div>
<div class="a" style="left:1084px;top:72px;width:276px;height:599px;background:#252526;border:1px solid #3F3F46"></div>
<div class="a" style="left:1085px;top:73px;width:274px;height:49px;background:#2D2D30"></div>
<div class="t" style="left:1089.40px;top:75.84px;font-size:12px;color:#F1F1F1;letter-spacing:-0.100px">Solution Explorer</div>
<svg class="a" style="left:1187px;top:81px" width="117" height="5"><defs><pattern id="g1187" width="4" height="5" patternUnits="userSpaceOnUse"><rect x="0" y="0" width="1" height="1" fill="#5A5A5E"/><rect x="2" y="2" width="1" height="1" fill="#5A5A5E"/><rect x="0" y="4" width="1" height="1" fill="#5A5A5E"/></pattern></defs><rect width="117" height="5" fill="url(#g1187)"/></svg>
<svg class="a" style="left:1311.0px;top:81px" width="8" height="4" viewBox="0 0 8 4"><path d="M0 0H8 L4.0 4 Z" fill="#F1F1F1"/></svg>
<svg class="a" style="left:1327px;top:77px" width="9" height="13" viewBox="0 0 9 13"><path d="M2 0.5 H7 M2.5 0.5 V7 H6.5 V0.5 M1 7.5 H8 M4.5 7.5 V12.5" fill="none" stroke="#F1F1F1" stroke-width="1.1"/></svg>
<svg class="a" style="left:1343px;top:79px" width="10" height="9" viewBox="0 0 10 9"><path d="M0.5 0.5 L9.5 8.5 M9.5 0.5 L0.5 8.5" stroke="#F1F1F1" stroke-width="1.3"/></svg>
<svg class="a" style="left:1094px;top:102px" width="12" height="12" viewBox="0 0 12 12"><circle cx="6" cy="6" r="6" fill="#575757"/><path d="M9 6 H3.5 M5.8 3.5 L3.2 6 L5.8 8.5" stroke="#2D2D30" stroke-width="1.6" fill="none"/></svg>
<svg class="a" style="left:1116px;top:102px" width="12" height="12" viewBox="0 0 12 12"><circle cx="6" cy="6" r="6" fill="#575757"/><path d="M3 6 H8.5 M6.2 3.5 L8.8 6 L6.2 8.5" stroke="#2D2D30" stroke-width="1.6" fill="none"/></svg>
<svg class="a" style="left:1136px;top:100px" width="16" height="16" viewBox="0 0 16 16"><path d="M1.5 8 L8 1.5 L14.5 8" fill="none" stroke="#E0E0E0" stroke-width="1.4"/><path d="M3.5 7 V14.5 H12.5 V7" fill="none" stroke="#E0E0E0" stroke-width="1.4"/><rect x="6.5" y="9.5" width="3" height="5" fill="#E0E0E0"/><path d="M12 2 V5.5" stroke="#E0E0E0" stroke-width="1.2"/></svg>
<svg class="a" style="left:1158px;top:100px" width="16" height="16" viewBox="0 0 16 16"><rect x="6.5" y="1" width="8.5" height="12" fill="#2D2D30" stroke="#E0E0E0" stroke-width="1.1"/><path d="M6.5 3.3 H15" stroke="#E0E0E0" stroke-width="1.3"/><path d="M9 6 H10 M11 6 H13.5 M9 8.3 H10 M11 8.3 H13.5 M11 10.6 H13.5" stroke="#E0E0E0" stroke-width="1"/><path transform="translate(0.6 7.3) scale(0.42)" fill="#8C5AD8" fill-rule="evenodd" d="M0 4.8 L2.2 4.1 L7.2 7.6 L13.5 0 L20 2.4 L20 17.6 L13.5 20 L7.2 12.4 L2.2 15.9 L0 15.2 Z M2.4 7.6 L4.9 10 L2.4 12.4 Z M10.3 10 L14.8 6.2 L14.8 13.8 Z"/></svg>
<div class="a" style="left:1181px;top:98px;width:1px;height:20px;background:#46464A"></div>
<svg class="a" style="left:1190px;top:100px" width="16" height="16" viewBox="0 0 16 16"><path d="M1 1 H6.5 L4.5 3.5 V5.5 H3 V3.5 Z" fill="#E0E0E0"/><circle cx="9" cy="10" r="5" fill="none" stroke="#E0E0E0" stroke-width="1.2"/><path d="M9 7 V10.5 H11.5" fill="none" stroke="#E0E0E0" stroke-width="1.1"/></svg>
<svg class="a" style="left:1211.0px;top:107px" width="6" height="3" viewBox="0 0 6 3"><path d="M0 0H6 L3.0 3 Z" fill="#999999"/></svg>
<svg class="a" style="left:1223px;top:100px" width="16" height="16" viewBox="0 0 16 16"><path d="M2.5 7 C3 3.5 6 2 8.5 2 C10.5 2 12 3 13 4" fill="none" stroke="#3FA0F0" stroke-width="2.2"/><path d="M10.5 5.5 H15 V1 Z" fill="#3FA0F0"/><path d="M13.5 9 C13 12.5 10 14 7.5 14 C5.5 14 4 13 3 12" fill="none" stroke="#3FA0F0" stroke-width="2.2"/><path d="M5.5 10.5 H1 V15 Z" fill="#3FA0F0"/></svg>
<svg class="a" style="left:1247px;top:101px" width="13" height="13" viewBox="0 0 13 13"><rect x="0.5" y="5.5" width="7" height="7" fill="none" stroke="#D8D8D8" stroke-width="1.1"/><path d="M2.5 5.5 V3.5 H9.5 V10.5 H7.5 M4.5 3.5 V1.5 H11.5 V8.5 H9.5" fill="none" stroke="#D8D8D8" stroke-width="1.1"/><rect x="2" y="8.5" width="4" height="1" fill="#3FA0F0"/></svg>
<svg class="a" style="left:1267px;top:101px" width="16" height="15" viewBox="0 0 16 15"><path d="M1.5 11 V0.5 H6" fill="none" stroke="#D8D8D8" stroke-width="1"/><path d="M3.5 12 V2.5 H9 L11.5 5" fill="none" stroke="#D8D8D8" stroke-width="1"/><path d="M5.5 4.5 H11 L13.5 7 V14.5 H5.5 Z" fill="#2D2D30" stroke="#D8D8D8" stroke-width="1"/><path d="M7 8.5 H11.5 M7 10.5 H11.5 M7 12.5 H11.5" stroke="#D8D8D8" stroke-width="1"/></svg>
<div class="a" style="left:1290px;top:98px;width:1px;height:20px;background:#46464A"></div>
<svg class="a" style="left:1297px;top:101px" width="16" height="15" viewBox="0 0 16 15"><path d="M1.5 13.5 L8 7" stroke="#C0C0C0" stroke-width="3" stroke-linecap="round"/><path d="M7 5.5 C7 2.5 9.5 0.5 13 1.5 L10.5 4 L11.5 5.5 L13.5 6 L15 3.5 C15.5 7 13 9 9.5 8.5 Z" fill="#C0C0C0"/></svg>
<svg class="a" style="left:1320px;top:106px" width="15" height="5" viewBox="0 0 15 5"><rect x="0" y="3" width="7" height="1.2" fill="#C0C0C0"/><rect x="6" y="0" width="8.5" height="4.2" fill="#C0C0C0"/></svg>
<div class="a" style="left:1085px;top:122px;width:274px;height:1px;background:#3F3F46"></div>
<div class="a" style="left:1085px;top:123px;width:274px;height:19px;background:#333337"></div>
<div class="a" style="left:1346px;top:123px;width:13px;height:19px;background:#3F3F46"></div>
<div class="t" style="left:1090.30px;top:124.54px;font-size:12px;color:#999999;letter-spacing:-0.156px">Search Solution Explorer (Ctrl+;)</div>
<svg class="a" style="left:1330px;top:125px" width="15" height="15" viewBox="0 0 15 15"><circle cx="9.3" cy="5.7" r="3.9" fill="none" stroke="#F1F1F1" stroke-width="1.6"/><path d="M6.6 8.4 L1.6 13.4" stroke="#F1F1F1" stroke-width="2.2" stroke-linecap="round"/></svg>
<svg class="a" style="left:1349.0px;top:131px" width="6" height="3" viewBox="0 0 6 3"><path d="M0 0H6 L3.0 3 Z" fill="#F1F1F1"/></svg>
<div class="a" style="left:1085px;top:142px;width:274px;height:1px;background:#3F3F46"></div>
<div class="a" style="left:1085px;top:163px;width:274px;height:18px;background:#3F3F46"></div>
<svg class="a" style="left:1100px;top:148px" width="15" height="15" viewBox="0 0 15 15"><path d="M0 0 H14 V12.5 H9 V11.4 H12.9 V3 H1.1 V6.5 H0 Z" fill="#D8D8D8"/><rect x="1" y="1" width="12" height="2" fill="#D8D8D8"/><path transform="translate(0 5.8) scale(0.42)" fill="#8C5AD8" fill-rule="evenodd" d="M0 4.8 L2.2 4.1 L7.2 7.6 L13.5 0 L20 2.4 L20 17.6 L13.5 20 L7.2 12.4 L2.2 15.9 L0 15.2 Z M2.4 7.6 L4.9 10 L2.4 12.4 Z M10.3 10 L14.8 6.2 L14.8 13.8 Z"/></svg>
<div class="t" style="left:1120.40px;top:147.04px;font-size:12px;color:#F1F1F1;letter-spacing:-0.083px">Solution 'Print PDF' (1 of 1 project)</div>
<svg class="a" style="left:1096px;top:169px" width="7" height="7" viewBox="0 0 7 7"><path d="M6.5 0.5 V6.5 H0.5 Z" fill="#F1F1F1"/></svg>
<svg class="a" style="left:1117px;top:167px" width="16" height="13" viewBox="0 0 16 13"><rect x="0.6" y="0.6" width="14.3" height="11.8" fill="#252526" stroke="#8DBA86" stroke-width="1.1"/><text x="2.2" y="9.4" font-family="Liberation Sans" font-weight="bold" font-size="8.6" fill="#D8D8D8">C#</text></svg>
<div class="t" style="left:1138.20px;top:164.84px;font-size:12px;color:#F1F1F1;letter-spacing:-0.375px;font-weight:bold">Print PDF</div>
<svg class="a" style="left:1113px;top:187px" width="6" height="9" viewBox="0 0 6 9"><path d="M0.6 0.6 L5.4 4.5 L0.6 8.4 Z" fill="none" stroke="#E0E0E0" stroke-width="1.1"/></svg>
<svg class="a" style="left:1136px;top:186px" width="15" height="10" viewBox="0 0 15 10"><rect x="0" y="5" width="3" height="3" fill="#D0D0D0"/><rect x="4" y="5" width="2" height="2" fill="#D0D0D0"/><rect x="6" y="3" width="4" height="6" fill="#D0D0D0"/><rect x="11" y="1" width="4" height="4" fill="#D0D0D0"/><rect x="8" y="0" width="2" height="2" fill="#D0D0D0"/></svg>
<div class="t" style="left:1156.30px;top:183.04px;font-size:12px;color:#F1F1F1;letter-spacing:-0.318px">Dependencies</div>
<svg class="a" style="left:1113px;top:205px" width="6" height="9" viewBox="0 0 6 9"><path d="M0.6 0.6 L5.4 4.5 L0.6 8.4 Z" fill="none" stroke="#E0E0E0" stroke-width="1.1"/></svg>
<svg class="a" style="left:1137px;top:204px" width="13" height="9" viewBox="0 0 13 9"><text x="0" y="7.6" font-family="Liberation Sans" font-weight="bold" font-size="9" fill="#89C37A">C#</text></svg>
<div class="t" style="left:1156.30px;top:201.04px;font-size:12px;color:#F1F1F1;letter-spacing:-0.222px">Program.cs</div>
<svg class="a" style="left:1342px;top:255px" width="13" height="20" viewBox="0 0 13 20"><path d="M1 1 V16 L4.5 12.5 L7.5 18.5 L10 17.3 L7 11.5 H11.5 Z" fill="#000" stroke="#FFFFFF" stroke-width="1.2"/></svg>
<div class="a" style="left:1084px;top:670px;width:102px;height:21px;background:#252526;border:1px solid #3F3F46;border-top:none"></div>
<div class="t" style="left:1090.00px;top:672.34px;font-size:12px;color:#3C9BE8;letter-spacing:-0.088px">Solution Explorer</div>
<div class="t" style="left:1192.00px;top:672.34px;font-size:12px;color:#F1F1F1;letter-spacing:-0.300px">Git Changes</div>
<div class="a" style="left:0px;top:697px;width:1366px;height:22px;background:#007ACC"></div>
<svg class="a" style="left:4px;top:703px" width="17" height="13" viewBox="0 0 17 13"><path d="M5 0.8 H16 L13 11.6 H1.5 Z" fill="none" stroke="#FFFFFF" stroke-width="1.3"/></svg>
<div class="t" style="left:28.50px;top:701.44px;font-size:12px;color:#F1F1F1;transform:scaleX(0.8914);transform-origin:0 0">Ready</div>
<svg class="a" style="left:1327px;top:700px" width="22" height="18" viewBox="0 0 22 18"><path d="M2 11 C2 6 3.5 2 7 2 C10.5 2 12 6 12 11 L13 12.5 H1 Z" fill="#D8D8D8"/><circle cx="7" cy="14" r="1.6" fill="#D8D8D8"/><circle cx="15" cy="11.5" r="6" fill="#E51400" stroke="#007ACC" stroke-width="0.8"/><text x="12" y="15.5" font-family="Liberation Sans" font-weight="bold" font-size="10" fill="#FFFFFF">2</text></svg>
</body></html>
